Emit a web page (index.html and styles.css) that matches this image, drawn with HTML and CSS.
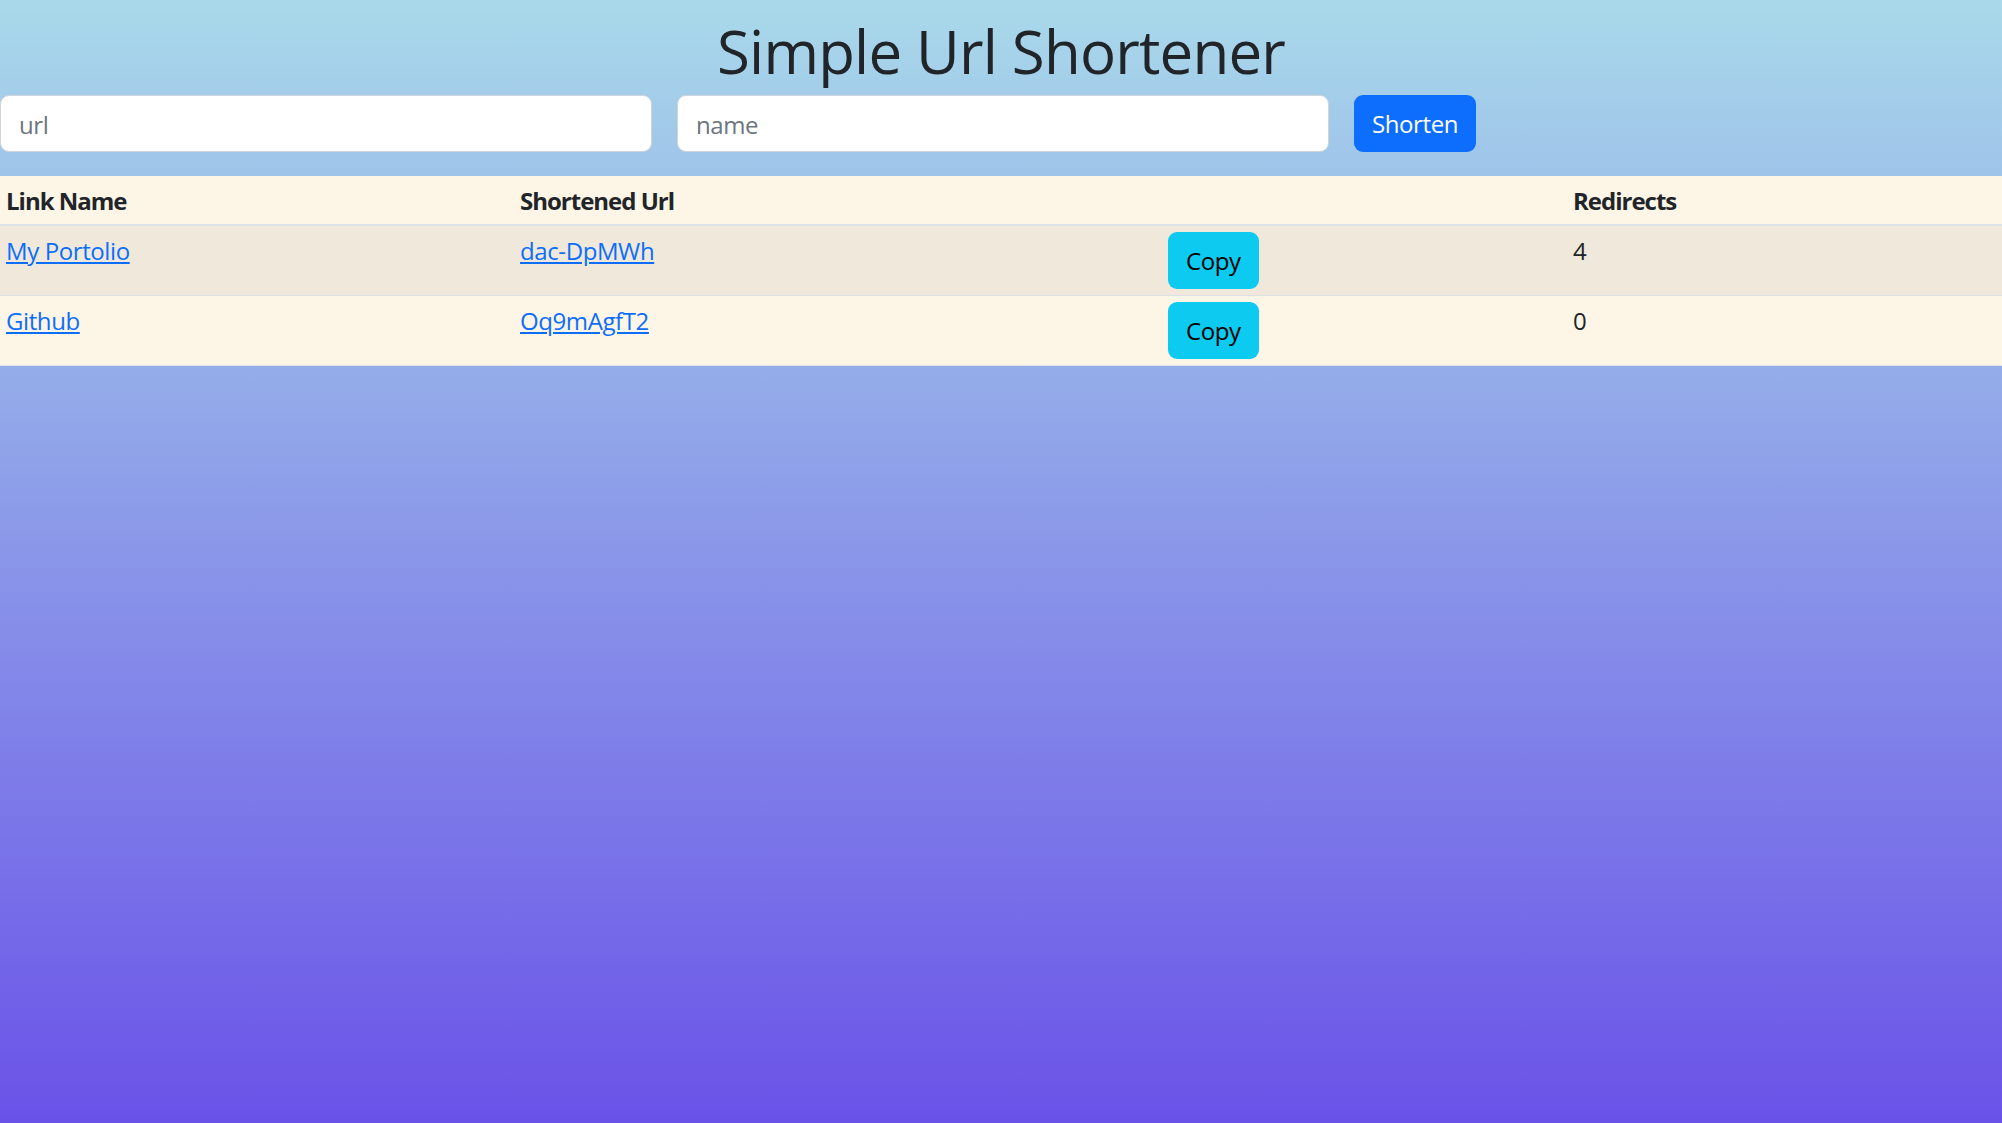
FILE: index.html
```html
<!DOCTYPE html>
<html lang="en">
<head>
<meta charset="utf-8">
<title>Simple Url Shortener</title>
<link rel="stylesheet" href="styles.css">
</head>
<body>
  <header class="top">
    <h1 class="title">Simple Url Shortener</h1>
    <form class="shorten-form">
      <input class="field" type="text" placeholder="url">
      <input class="field" type="text" placeholder="name">
      <button class="btn btn-primary" type="button">Shorten</button>
    </form>
  </header>
  <table class="links">
    <colgroup>
      <col class="col-name">
      <col class="col-short">
      <col class="col-copy">
      <col class="col-redirects">
    </colgroup>
    <thead>
      <tr>
        <th>Link Name</th>
        <th>Shortened Url</th>
        <th></th>
        <th>Redirects</th>
      </tr>
    </thead>
    <tbody>
      <tr class="striped">
        <td><a href="#">My Portolio</a></td>
        <td><a href="#">dac-DpMWh</a></td>
        <td><button class="btn btn-info" type="button">Copy</button></td>
        <td>4</td>
      </tr>
      <tr>
        <td><a href="#">Github</a></td>
        <td><a href="#">Oq9mAgfT2</a></td>
        <td><button class="btn btn-info" type="button">Copy</button></td>
        <td>0</td>
      </tr>
    </tbody>
  </table>
</body>
</html>
```

FILE: styles.css
```css
html {
  min-height: 100%;
  background: linear-gradient(to bottom, #a9d9ea 0%, #6a52e8 100%);
  background-attachment: fixed;
}

body {
  margin: 0;
  min-height: 1123px;
  font-family: "Open Sans", "Noto Sans", sans-serif;
  font-size: 24px;
  line-height: 1.5;
  letter-spacing: -0.4px;
  color: #212529;
}

.title {
  margin: 0 0 8px;
  padding-top: 15px;
  font-size: 60px;
  line-height: 72px;
  font-weight: 400;
  letter-spacing: -0.8px;
  text-align: center;
}

.shorten-form {
  display: flex;
  align-items: center;
  gap: 25px;
  margin: 0 0 24px;
}

.field {
  box-sizing: border-box;
  width: 652px;
  height: 57px;
  padding: 2px 18px 0;
  border: 1px solid #ced4da;
  border-radius: 9px;
  background: #fff;
  font: inherit;
  letter-spacing: -0.4px;
  color: #212529;
}

.field::placeholder {
  color: #6c757d;
}

.btn {
  box-sizing: border-box;
  height: 57px;
  padding: 0 18px;
  border: none;
  border-radius: 9px;
  font: inherit;
  letter-spacing: -0.4px;
  cursor: pointer;
}

.btn-primary {
  background: #0d6efd;
  color: #fff;
}

.btn-info {
  display: block;
  background: #0dcaf0;
  color: #000;
}

.links {
  width: 100%;
  table-layout: fixed;
  border-collapse: collapse;
  background: #fdf5e6;
}

.col-name { width: 514px; }
.col-short { width: 648px; }
.col-copy { width: 405px; }
.col-redirects { width: 435px; }

.links th,
.links td {
  padding: 7px 6px 5px;
  text-align: left;
  vertical-align: top;
}

.links td:nth-child(3) {
  padding: 6px;
}

.links th {
  font-weight: 700;
  letter-spacing: -1px;
  border-bottom: 2px solid #dee2e6;
}

.links td {
  border-bottom: 1px solid #dee2e6;
}

.links .striped td {
  background: #f0e9db;
}

.links a {
  color: #0d6efd;
  text-decoration: underline;
}
```
